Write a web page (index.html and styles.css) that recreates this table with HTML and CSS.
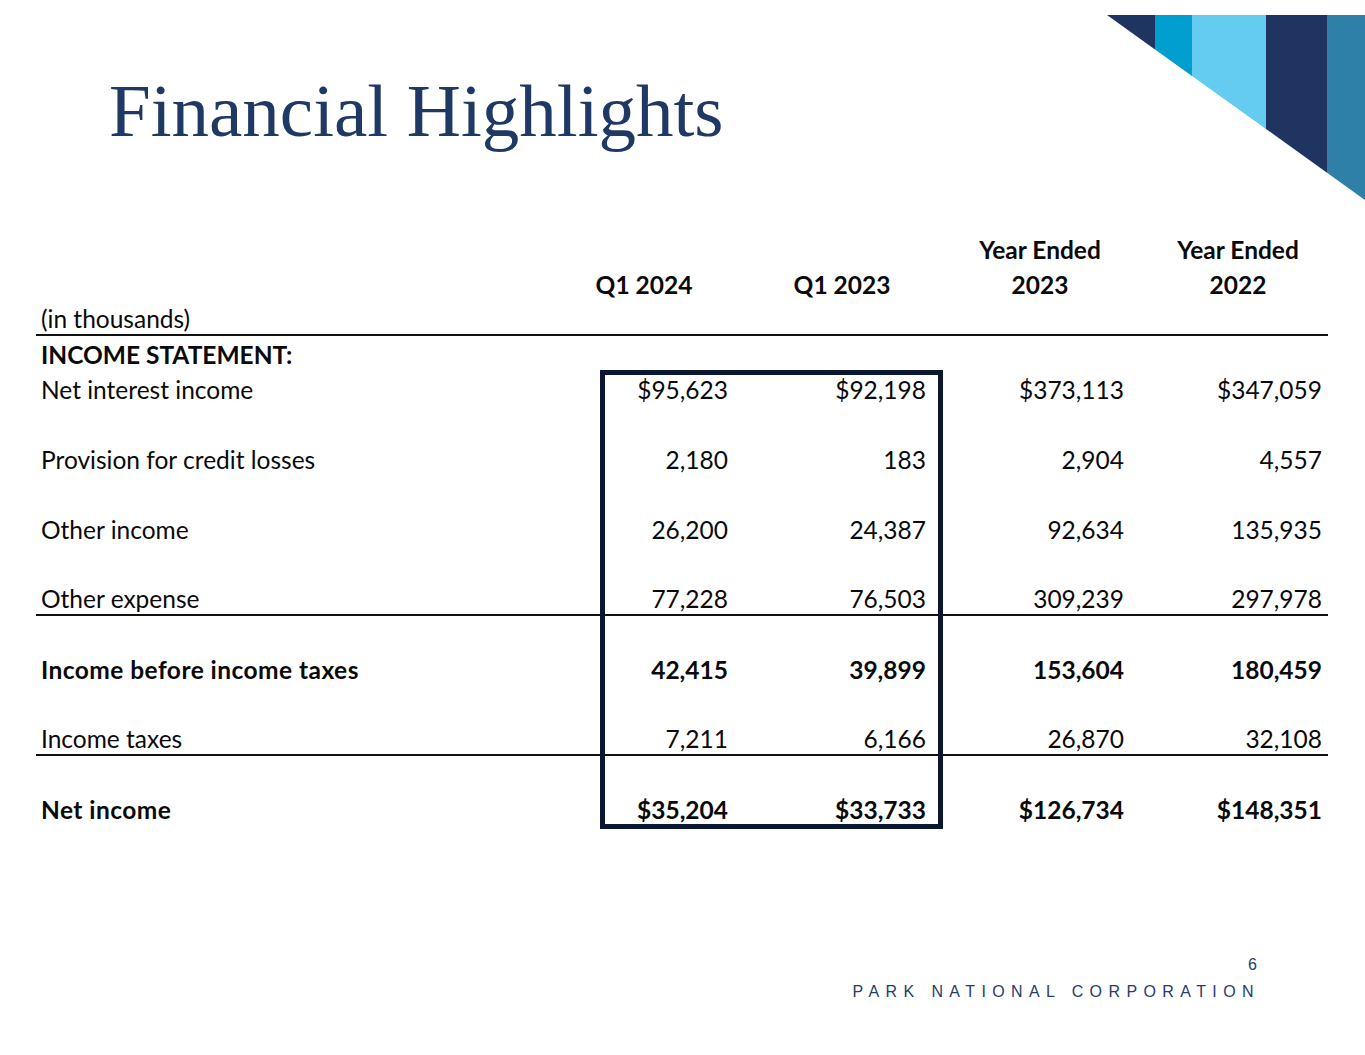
FILE: index.html
```html
<!DOCTYPE html>
<html lang="en">
<head>
<meta charset="utf-8">
<title>Financial Highlights</title>
<link rel="stylesheet" href="styles.css">
</head>
<body>
<div class="slide">
  <svg class="corner" width="258" height="185" viewBox="0 0 258 185" aria-hidden="true">
    <polygon points="0,0 48,0 48,34.4" fill="#1f3461"/>
    <polygon points="48,0 85,0 85,61 48,34.4" fill="#009fcf"/>
    <polygon points="85,0 159,0 159,114 85,61" fill="#64ccf0"/>
    <polygon points="159,0 220,0 220,157.7 159,114" fill="#1f3461"/>
    <polygon points="220,0 258,0 258,185 220,157.7" fill="#2e80a8"/>
  </svg>

  <h1 class="title">Financial Highlights</h1>

  <div class="table">
    <div class="row head">
      <div class="label"></div>
      <div class="cell"></div>
      <div class="cell"></div>
      <div class="cell">Year Ended</div>
      <div class="cell">Year Ended</div>
    </div>
    <div class="row head">
      <div class="label"></div>
      <div class="cell">Q1 2024</div>
      <div class="cell">Q1 2023</div>
      <div class="cell">2023</div>
      <div class="cell">2022</div>
    </div>
    <div class="row rule">
      <div class="label">(in thousands)</div>
    </div>
    <div class="row bold">
      <div class="label">INCOME STATEMENT:</div>
    </div>
    <div class="row">
      <div class="label">Net interest income</div>
      <div class="num">$95,623</div>
      <div class="num">$92,198</div>
      <div class="num">$373,113</div>
      <div class="num">$347,059</div>
    </div>
    <div class="row"></div>
    <div class="row">
      <div class="label">Provision for credit losses</div>
      <div class="num">2,180</div>
      <div class="num">183</div>
      <div class="num">2,904</div>
      <div class="num">4,557</div>
    </div>
    <div class="row"></div>
    <div class="row">
      <div class="label">Other income</div>
      <div class="num">26,200</div>
      <div class="num">24,387</div>
      <div class="num">92,634</div>
      <div class="num">135,935</div>
    </div>
    <div class="row"></div>
    <div class="row rule">
      <div class="label">Other expense</div>
      <div class="num">77,228</div>
      <div class="num">76,503</div>
      <div class="num">309,239</div>
      <div class="num">297,978</div>
    </div>
    <div class="row"></div>
    <div class="row bold">
      <div class="label wide">Income before income taxes</div>
      <div class="num">42,415</div>
      <div class="num">39,899</div>
      <div class="num">153,604</div>
      <div class="num">180,459</div>
    </div>
    <div class="row"></div>
    <div class="row rule">
      <div class="label">Income taxes</div>
      <div class="num">7,211</div>
      <div class="num">6,166</div>
      <div class="num">26,870</div>
      <div class="num">32,108</div>
    </div>
    <div class="row"></div>
    <div class="row bold">
      <div class="label wide">Net income</div>
      <div class="num">$35,204</div>
      <div class="num">$33,733</div>
      <div class="num">$126,734</div>
      <div class="num">$148,351</div>
    </div>
    <div class="highlight"></div>
  </div>

  <footer class="footer">
    <div class="page-num">6</div>
    <div class="corp">PARK NATIONAL CORPORATION</div>
  </footer>
</div>
</body>
</html>
```

FILE: styles.css
```css
* {
  box-sizing: border-box;
}

html, body {
  margin: 0;
  padding: 0;
  background: #ffffff;
}

.slide {
  position: relative;
  width: 1365px;
  height: 1055px;
  overflow: hidden;
  display: flex;
  flex-direction: column;
}

.corner {
  position: absolute;
  top: 15px;
  left: 1107px;
}

.title {
  margin: 73px 0 0 109px;
  font-family: "Liberation Serif", "Times New Roman", serif;
  font-weight: normal;
  font-size: 75px;
  line-height: 75px;
  color: #1f3864;
}

.table {
  position: relative;
  margin: 82.5px 0 0 36px;
  width: 1292px;
  font-family: Lato, "Noto Sans", sans-serif;
  font-size: 24.5px;
  color: #0a0a0a;
  font-variant-numeric: tabular-nums;
}

.row {
  display: grid;
  grid-template-columns: 500px 180px 180px 180px 180px;
  column-gap: 18px;
  height: 35px;
  padding-top: 2px;
  line-height: 33px;
}

.row.rule {
  border-bottom: 2px solid #111111;
  line-height: 31px;
}

.head,
.bold {
  font-weight: bold;
}

.label {
  padding-left: 5px;
  white-space: nowrap;
}

.label.wide {
  letter-spacing: 0.45px;
}

.cell {
  text-align: center;
  white-space: nowrap;
}

.num {
  text-align: right;
  padding-right: 6px;
  white-space: nowrap;
}

.highlight {
  position: absolute;
  left: 564px;
  top: 139.5px;
  width: 343px;
  height: 459px;
  border: 5px solid #0b1730;
}

.footer {
  margin: 129.5px 108px 0 0;
  display: flex;
  flex-direction: column;
  align-items: flex-end;
  font-family: "Liberation Sans", Arial, sans-serif;
  color: #263c6b;
  font-size: 16px;
  line-height: 20px;
}

.page-num {
  font-size: 16px;
}

.corp {
  margin-top: 7px;
  margin-right: -3px;
  letter-spacing: 6.4px;
}
```
